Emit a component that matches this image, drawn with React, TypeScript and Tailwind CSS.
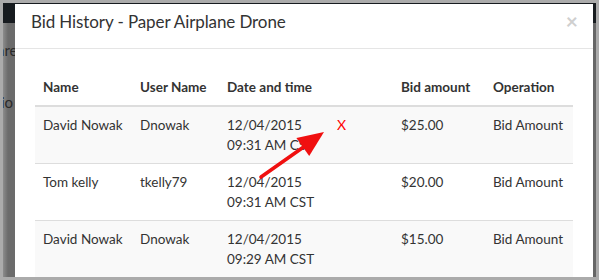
const rows = [
  { name: "David Nowak", user: "Dnowak", date: "12/04/2015", time: "09:31 AM CST", amount: "$25.00", op: "Bid Amount" },
  { name: "Tom kelly", user: "tkelly79", date: "12/04/2015", time: "09:31 AM CST", amount: "$20.00", op: "Bid Amount" },
  { name: "David Nowak", user: "Dnowak", date: "12/04/2015", time: "09:29 AM CST", amount: "$15.00", op: "Bid Amount" },
];

export default function App() {
  return (
    <div className="h-[280px] w-[599px] overflow-hidden bg-[#ababab] p-[3px] font-['Lato',sans-serif] text-[#333]">
      <div className="relative h-full w-full overflow-hidden bg-[linear-gradient(90deg,#8c8c8c_0px,#6b6b6b_5px,#666_100%)]">
        {/* page behind the backdrop */}
        <div className="h-[20px] bg-[#171b1f]" />
        <span className="absolute left-[-6px] top-[36px] text-[15px] text-[#2a2a2a]">are</span>
        <span className="absolute left-[-2px] top-[88px] text-[15px] text-[#2a2a2a]">io</span>

        {/* modal */}
        <div className="absolute left-[12px] top-[1px] h-[300px] w-[578px] bg-white">
          <div className="flex h-[45px] items-start justify-between border-b border-[#e5e5e5] pl-[16px] pr-[15px] pt-[6px]">
            <h4 className="text-[17px] leading-[24px] tracking-[-0.1px] text-[#333]">Bid History - Paper Airplane Drone</h4>
            <span className="mt-[-1px] text-[21px] font-bold leading-[24px] text-[#cfcfcf]">×</span>
          </div>

          <div className="relative px-[20px] pt-[20px]">
            <table className="w-[538px] table-fixed border-collapse whitespace-nowrap text-[13.5px] leading-[20px]">
              <colgroup>
                <col className="w-[97px]" />
                <col className="w-[87px]" />
                <col className="w-[174px]" />
                <col className="w-[92px]" />
                <col className="w-[88px]" />
              </colgroup>
              <thead>
                <tr className="border-b-2 border-[#ddd]">
                  <th className="p-[8px] text-left font-bold">Name</th>
                  <th className="p-[8px] text-left font-bold">User Name</th>
                  <th className="p-[8px] text-left font-bold">Date and time</th>
                  <th className="p-[8px] text-left font-bold">Bid amount</th>
                  <th className="p-[8px] text-left font-bold">Operation</th>
                </tr>
              </thead>
              <tbody>
                {rows.map((r, i) => (
                  <tr key={i} className={`border-t border-[#ddd] ${i % 2 === 0 ? "bg-[#f9f9f9]" : "bg-white"}`}>
                    <td className="p-[8px] align-top">{r.name}</td>
                    <td className="p-[8px] align-top">{r.user}</td>
                    <td className="p-[8px] align-top">
                      {r.date}
                      <br />
                      {r.time}
                    </td>
                    <td className="p-[8px] align-top">{r.amount}</td>
                    <td className="p-[8px] align-top">{r.op}</td>
                  </tr>
                ))}
              </tbody>
            </table>

            {/* annotation */}
            <span className="absolute left-[322px] top-[66px] text-[14px] leading-[20px] text-[#f00]">X</span>
            <svg className="absolute left-[0px] top-[0px]" width="578" height="230" viewBox="0 0 578 230">
              <line x1="246" y1="128" x2="290" y2="97" stroke="#f01010" strokeWidth="3.6" strokeLinecap="round" />
              <polygon points="309,83 281.4,89.1 294.2,107.1" fill="#f01010" />
            </svg>
          </div>
        </div>
      </div>
    </div>
  );
}
